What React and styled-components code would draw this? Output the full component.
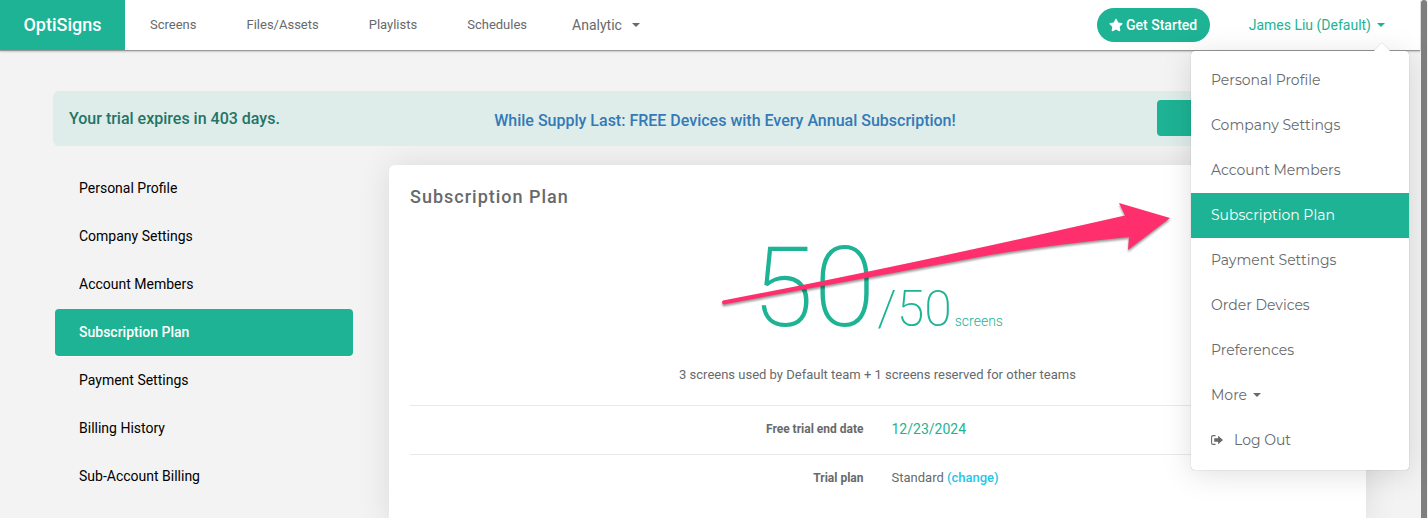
import React from 'react'
import styled, { createGlobalStyle } from 'styled-components'
import { FaStar } from 'react-icons/fa'

const GREEN = '#1db394'
const GREY = '#676a6c'

const GlobalStyle = createGlobalStyle`
  * {
    box-sizing: border-box;
  }
  body {
    margin: 0;
    overflow: hidden;
    background: #f3f3f3;
    color: ${GREY};
    font-family: Roboto, 'Liberation Sans', sans-serif;
    font-size: 13px;
    line-height: 18px;
  }
  a {
    text-decoration: none;
  }
  button {
    border: none;
    cursor: pointer;
    font-family: inherit;
  }
`;

const Page = styled.div`
  display: flex;
  height: 100vh;
`;

const Main = styled.div`
  flex: 1;
  min-width: 0;
  display: flex;
  flex-direction: column;
`;

const ScrollTrack = styled.div`
  width: 8px;
  padding: 0 1px;
  background: #f3f3f3;
`;

const ScrollThumb = styled.div`
  height: 100%;
  border-radius: 4px 4px 0 0;
  background: #7f7f7f;
`;

const Header = styled.header`
  position: relative;
  z-index: 3;
  display: flex;
  align-items: center;
  height: 50px;
  padding-right: 35px;
  background: #fff;
  box-shadow: 0 1px 1px #999, 0 2px 2px rgba(0, 0, 0, 0.12);
`;

const Logo = styled.a`
  display: flex;
  align-items: center;
  justify-content: center;
  width: 125px;
  height: 50px;
  background: ${GREEN};
  color: #fff;
  font-size: 18px;
  font-weight: 500;
`;

const Nav = styled.nav`
  flex: 1;
  display: flex;
  align-items: center;
  gap: 45px;
  padding-left: 25px;
`;

const NavLinks = styled.div`
  display: flex;
  gap: 50px;
`;

const NavLink = styled.a`
  color: ${GREY};
`;

const NavButton = styled.button`
  display: flex;
  align-items: center;
  gap: ${(props) => props.$gap || '6px'};
  padding: 0;
  background: none;
  color: ${(props) => props.$color || GREY};
  font-size: 14px;
  line-height: 20px;
`;

const Caret = styled.span`
  border-top: 4px solid;
  border-left: 4px solid transparent;
  border-right: 4px solid transparent;
`;

const GetStarted = styled.button`
  display: flex;
  align-items: center;
  justify-content: center;
  gap: 3px;
  width: 113px;
  height: 34px;
  margin-right: 39px;
  padding: 0;
  border-radius: 17px;
  background: ${GREEN};
  color: #fff;
  font-size: 14px;
  font-weight: 500;
`;

const UserBox = styled.div`
  position: relative;
`;

const Menu = styled.ul`
  position: absolute;
  top: 36px;
  right: -24px;
  width: 218px;
  margin: 0;
  padding: 7px 0;
  list-style: none;
  border-radius: 4px;
  background: #fff;
  box-shadow: 0 0 1px rgba(0, 0, 0, 0.4), 0 4px 30px rgba(0, 0, 0, 0.13);
  &::before {
    content: '';
    position: absolute;
    top: -8px;
    right: 19px;
    border-bottom: 8px solid #fff;
    border-left: 8px solid transparent;
    border-right: 8px solid transparent;
    filter: drop-shadow(0 -1px 0 rgba(0, 0, 0, 0.08));
  }
`;

const MenuLink = styled.a`
  display: flex;
  align-items: center;
  gap: ${(props) => props.$gap || '6px'};
  height: 45px;
  padding: 0 20px 2px;
  background: ${(props) => (props.$active ? GREEN : 'transparent')};
  color: ${(props) => (props.$active ? '#fff' : GREY)};
  font-family: Montserrat, Inter, sans-serif;
  font-size: 14px;
`;

const Content = styled.main`
  flex: 1;
  display: flex;
  flex-direction: column;
  gap: 19px;
  padding: 41px 54px 0 53px;
`;

const Banner = styled.section`
  position: relative;
  z-index: 1;
  display: grid;
  grid-template-columns: 224px 1fr 194px;
  align-items: center;
  height: 55px;
  padding: 0 15px 0 16px;
  border-radius: 6px;
  background: #deecea;
  color: #1f7566;
  font-size: 16px;
  font-weight: 500;
`;

const Promo = styled.a`
  padding-top: 4px;
  color: #337ab7;
  text-align: center;
`;

const Subscribe = styled.button`
  height: 36px;
  margin-bottom: 2px;
  border-radius: 4px;
  background: ${GREEN};
`;

const Columns = styled.div`
  flex: 1;
  display: grid;
  grid-template-columns: 300px 1fr;
  gap: 36px;
`;

const Side = styled.nav`
  display: flex;
  flex-direction: column;
  gap: 1px;
  padding-left: 2px;
`;

const SideLink = styled.a`
  display: flex;
  align-items: center;
  height: 47px;
  padding: 0 24px 2px;
  border-radius: 4px;
  background: ${(props) => (props.$active ? GREEN : 'transparent')};
  box-shadow: ${(props) => (props.$active ? '0 1px 0 #fff' : 'none')};
  color: ${(props) => (props.$active ? '#fff' : '#000')};
  font-size: 14px;
  font-weight: ${(props) => (props.$active ? 500 : 400)};
`;

const Card = styled.section`
  position: relative;
  padding: 20px 21px;
  border-radius: 6px 6px 0 0;
  background: #fff;
  box-shadow: 0 0 32px rgba(0, 0, 0, 0.1);
`;

const Title = styled.h1`
  margin: 0;
  font-size: 18px;
  font-weight: 500;
  line-height: 24px;
  letter-spacing: 1px;
`;

const Usage = styled.div`
  display: flex;
  align-items: baseline;
  justify-content: center;
  margin-top: 14px;
  color: ${GREEN};
  font-weight: 200;
`;

const Used = styled.span`
  font-size: 112px;
  line-height: 130px;
`;

const Total = styled.span`
  margin: 0 3px 0 2px;
  font-size: 50px;
`;

const Unit = styled.span`
  font-size: 14px;
  font-weight: 300;
`;

const Note = styled.p`
  margin: 13px 0 21px;
  text-align: center;
`;

const Details = styled.table`
  width: 100%;
  border-collapse: collapse;
  table-layout: fixed;
  th, td {
    height: 49px;
    padding: 0 14px 2px;
    border-top: 1px solid #e7eaec;
  }
  th {
    font-size: 12px;
    font-weight: 700;
    text-align: right;
  }
`;

const EndDate = styled.span`
  color: ${GREEN};
  font-size: 14px;
`;

const ChangeLink = styled.a`
  color: #23c6e8;
  font-weight: 500;
`;

const Arrow = styled.svg`
  position: absolute;
  top: 30px;
  left: 331px;
  pointer-events: none;
  filter: drop-shadow(0 2px 1px rgba(0, 0, 0, 0.4));
`;

const SignOut = () => (
  <svg width="12" height="10" viewBox="0 0 12 10" aria-hidden="true">
    <path d="M4.500.6H2A1.400 1.400 0 0 0 .6 2v6A1.400 1.400 0 0 0 2 9.400h2.500" fill="none" stroke="currentColor" strokeWidth="1.1" />
    <path d="M3.200 3.200h3.900V.8L12 5 7.100 9.200V6.800H3.200z" fill="currentColor" />
  </svg>
)

const navItems = ['Screens', 'Files/Assets', 'Playlists', 'Schedules']
const sideItems = [
  'Personal Profile',
  'Company Settings',
  'Account Members',
  'Subscription Plan',
  'Payment Settings',
  'Billing History',
  'Sub-Account Billing',
]
const menuItems = [
  'Personal Profile',
  'Company Settings',
  'Account Members',
  'Subscription Plan',
  'Payment Settings',
  'Order Devices',
  'Preferences',
]
const current = 'Subscription Plan'

const App = () => {
  return (
    <Page>
      <GlobalStyle />
      <Main>
        <Header>
          <Logo href="#">OptiSigns</Logo>
          <Nav>
            <NavLinks>
              {navItems.map((item) => <NavLink href="#" key={item}>{item}</NavLink>)}
            </NavLinks>
            <NavButton $gap="10px">Analytic <Caret /></NavButton>
          </Nav>
          <GetStarted><FaStar size={14} />Get Started</GetStarted>
          <UserBox>
            <NavButton $color={GREEN} aria-expanded="true">James Liu (Default) <Caret /></NavButton>
            <Menu>
              {menuItems.map((item) => (
                <li key={item}>
                  <MenuLink href="#" $active={item === current}>{item}</MenuLink>
                </li>
              ))}
              <li><MenuLink href="#">More <Caret /></MenuLink></li>
              <li><MenuLink href="#" $gap="11px"><SignOut />Log Out</MenuLink></li>
            </Menu>
          </UserBox>
        </Header>

        <Content>
          <Banner>
            <span>Your trial expires in 403 days.</span>
            <Promo href="#">While Supply Last: FREE Devices with Every Annual Subscription!</Promo>
            <Subscribe aria-label="Subscribe" />
          </Banner>

          <Columns>
            <Side>
              {sideItems.map((item) => (
                <SideLink href="#" key={item} $active={item === current}>{item}</SideLink>
              ))}
            </Side>

            <Card>
              <Title>Subscription Plan</Title>
              <Usage>
                <Used>50</Used>
                <Total>/50</Total>
                <Unit>screens</Unit>
              </Usage>
              <Note>3 screens used by Default team + 1 screens reserved for other teams</Note>
              <Details>
                <tbody>
                  <tr>
                    <th scope="row">Free trial end date</th>
                    <td><EndDate>12/23/2024</EndDate></td>
                  </tr>
                  <tr>
                    <th scope="row">Trial plan</th>
                    <td>Standard <ChangeLink href="#">(change)</ChangeLink></td>
                  </tr>
                </tbody>
              </Details>
              {/* callout pointing at the open menu */}
              <Arrow width="456" height="116" viewBox="0 0 456 116" aria-hidden="true">
                <path
                  d="M3 105.500 Q160 76 405 20.500 L399 8 L450 23 L408 55 L409 42 Q330 50 270 60 L3.500 109.500 Q0.500 107.500 3 105.500z"
                  fill="#ff2e6c"
                />
              </Arrow>
            </Card>
          </Columns>
        </Content>
      </Main>
      <ScrollTrack><ScrollThumb /></ScrollTrack>
    </Page>
  )
}

export default App
